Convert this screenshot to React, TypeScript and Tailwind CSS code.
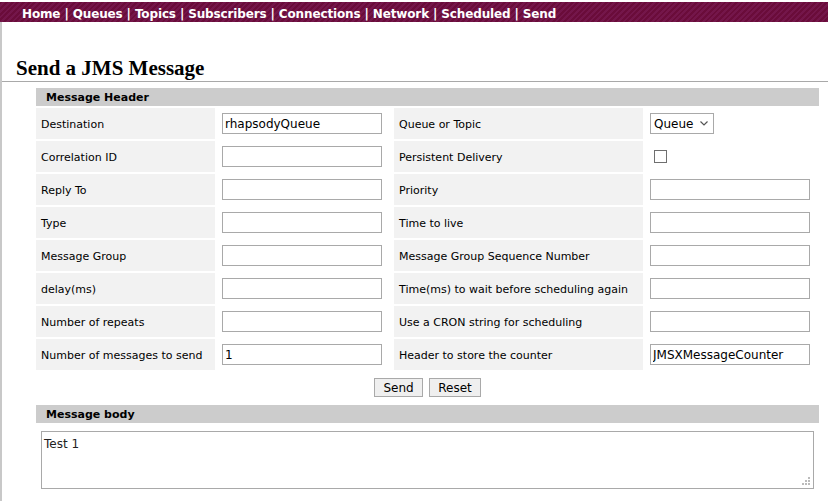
import React from "react";

type Field = {
    label: string;
    value?: string;
    kind?: "input" | "select" | "checkbox";
};

const rows: [Field, Field][] = [
    [{label: "Destination", value: "rhapsodyQueue"}, {label: "Queue or Topic", kind: "select"}],
    [{label: "Correlation ID"}, {label: "Persistent Delivery", kind: "checkbox"}],
    [{label: "Reply To"}, {label: "Priority"}],
    [{label: "Type"}, {label: "Time to live"}],
    [{label: "Message Group"}, {label: "Message Group Sequence Number"}],
    [{label: "delay(ms)"}, {label: "Time(ms) to wait before scheduling again"}],
    [{label: "Number of repeats"}, {label: "Use a CRON string for scheduling"}],
    [{label: "Number of messages to send", value: "1"}, {label: "Header to store the counter", value: "JMSXMessageCounter"}],
];

const navItems = ["Home", "Queues", "Topics", "Subscribers", "Connections", "Network", "Scheduled", "Send"];

function FieldControl({field}: { field: Field }) {
    if (field.kind === "select") {
        return (
            <div className="relative w-[64px] h-[21px]">
                <select
                    defaultValue="Queue"
                    className="appearance-none w-full h-full border border-[#a9a9a9] bg-white pl-[3px] text-[12px] text-black outline-none">
                    <option>Queue</option>
                    <option>Topic</option>
                </select>
                <svg className="absolute right-[6px] top-[8px] pointer-events-none" width="8" height="5" viewBox="0 0 8 5">
                    <path d="M0.5 0.5 L4 4 L7.5 0.5" fill="none" stroke="#555" strokeWidth="1.2"/>
                </svg>
            </div>
        );
    }
    if (field.kind === "checkbox") {
        return (
            <input type="checkbox"
                   className="appearance-none block w-[13px] h-[13px] ml-[4px] border border-[#6f6f6f] bg-white"/>
        );
    }
    return (
        <input type="text" defaultValue={field.value ?? ""}
               className="block w-[160px] h-[21px] border border-[#a9a9a9] bg-white px-[2px] text-[12px] text-black outline-none"/>
    );
}

export default function App() {
    return (
        <div className="w-[828px] h-[501px] overflow-hidden bg-white pt-[2px] font-['DejaVu_Sans',sans-serif] text-black">
            <div
                className="h-[20px] flex items-center pl-[22px] pt-[3px] text-white font-bold text-[12px] tracking-[-0.14px] bg-[repeating-linear-gradient(135deg,#6a0c3a_0px,#6a0c3a_2px,#74164a_2px,#74164a_4px)]">
                {navItems.map((item, i) => (
                    <span key={item} className="whitespace-pre">
                        {item}{i < navItems.length - 1 ? " | " : ""}
                    </span>
                ))}
            </div>

            <div className="border-l-2 border-[#c8c8c8] h-[479px]">
                <h1 className="pt-[34px] pl-[14px] font-['Liberation_Serif',serif] font-bold text-[21px] leading-[25px] border-b border-[#a9a9a9]">
                    Send a JMS Message
                </h1>

                <div className="ml-[34px] w-[783px] mt-[6px]">
                    <div className="h-[18px] bg-[#cccccc] pl-[10px] pt-[2px] flex items-center text-[11px] font-bold">
                        Message Header
                    </div>
                    <div className="grid grid-cols-[179px_175px_249px_174px] gap-[2px] mt-[2px] text-[11px]">
                        {rows.map(([left, right]) => (
                            <React.Fragment key={left.label}>
                                <div className="h-[31px] bg-[#f2f2f2] px-[5px] pt-[4px] flex items-center">{left.label}</div>
                                <div className="h-[31px] px-[5px] flex items-center"><FieldControl field={left}/></div>
                                <div className="h-[31px] bg-[#f2f2f2] px-[5px] pt-[4px] flex items-center">{right.label}</div>
                                <div className="h-[31px] px-[5px] flex items-center"><FieldControl field={right}/></div>
                            </React.Fragment>
                        ))}
                    </div>

                    <div className="flex justify-center gap-[6px] mt-[8px]">
                        <button className="h-[19px] w-[49px] border border-[#a9a9a9] bg-[#efefef] text-[12px] text-black leading-none">Send</button>
                        <button className="h-[19px] w-[52px] border border-[#a9a9a9] bg-[#efefef] text-[12px] text-black leading-none">Reset</button>
                    </div>

                    <div className="h-[18px] bg-[#cccccc] pl-[10px] pt-[2px] flex items-center text-[11px] font-bold mt-[8px]">
                        Message body
                    </div>
                    <div className="px-[5px] pt-[8px]">
                        <div className="relative">
                            <textarea defaultValue="Test 1"
                                      className="block w-[773px] h-[58px] border border-[#a9a9a9] resize-none px-[2px] pt-[3px] text-[12px] text-[#222] outline-none"/>
                            <svg className="absolute right-[4px] bottom-[4px]" width="8" height="8" viewBox="0 0 8 8">
                                <rect x="6" y="0" width="2" height="2" fill="#bbb"/>
                                <rect x="3" y="3" width="2" height="2" fill="#bbb"/>
                                <rect x="6" y="3" width="2" height="2" fill="#bbb"/>
                                <rect x="0" y="6" width="2" height="2" fill="#bbb"/>
                                <rect x="3" y="6" width="2" height="2" fill="#bbb"/>
                                <rect x="6" y="6" width="2" height="2" fill="#bbb"/>
                            </svg>
                        </div>
                    </div>
                </div>
            </div>
        </div>
    );
}
